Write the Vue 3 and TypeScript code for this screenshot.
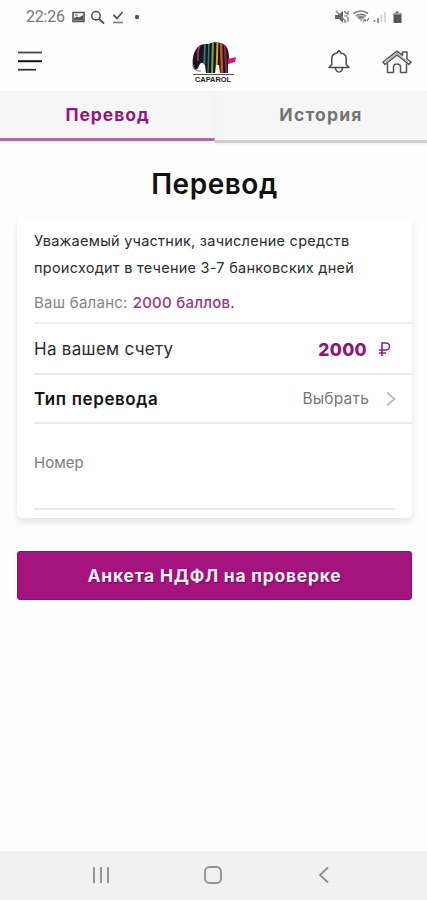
<script setup lang="ts">
import { ref } from 'vue'

type Tab = 'transfer' | 'history'
const activeTab = ref<Tab>('transfer')
const tabs: { id: Tab; label: string }[] = [
  { id: 'transfer', label: 'Перевод' },
  { id: 'history', label: 'История' },
]
const balance = 2000
</script>

<template>
  <div class="screen">
    <div class="status">
      <span class="clock">22:26</span>
      <svg class="status-left" width="72" height="16" viewBox="0 0 72 16" fill="none" stroke="#555" stroke-width="1.6">
        <path d="M1 3.500h11v9H1z" />
        <path d="M2 11.500V9l3-1.500 2 1 4-2.500v5.500z" fill="#555" stroke="none" />
        <path d="M3 6h3" stroke-width="1" />
        <circle cx="24" cy="6.700" r="4.200" />
        <path d="M27 10l5 4.500" stroke-width="2" />
        <path d="M41.500 6l3.500 3.500L50.500 3" stroke-width="1.800" />
        <path d="M41 13.500h10" stroke="#777" />
        <circle cx="65" cy="8" r="2.200" fill="#555" stroke="none" />
      </svg>
      <svg class="status-right" width="70" height="16" viewBox="0 0 70 16" fill="none" stroke="#777">
        <path d="M0 6h3l5-4v12l-4-4H0z" fill="#666" stroke="none" />
        <path d="M1 2l10 11M9 2l3 3M13 2v4M9 7h4M13 8v5M10 11v3" stroke="#777" stroke-width="1.200" />
        <path d="M18.500 4.500q7.500-5 14.500 0M21 7q5-3.500 10 0" stroke-width="1.700" />
        <path d="M20.500 6.500h11l-5.500 6z" fill="#aaa" stroke="none" />
        <path d="M23.500 9q2.500-2 5 0M28 12.500l2-2 1 2M32 12l2-3" stroke-width="1.300" />
        <path d="M39.500 13v-2M43 14V9" stroke="#777" stroke-width="1.500" />
        <path d="M46.500 13V6M50 13V3" stroke="#ccc" stroke-width="1.500" />
        <path d="M58.500 4h2V2.500h3V4h3v10h-8z" fill="#555" stroke="none" />
        <path d="M58.500 4.800h8" stroke="#aaa" stroke-width="1.800" />
      </svg>
    </div>

    <header class="header">
      <svg class="menu" width="26" height="22" viewBox="0 0 26 22">
        <path d="M0 2.500h24" stroke="#444" stroke-width="1.800" />
        <path d="M0 11.200h24" stroke="#111" stroke-width="2" />
        <path d="M0 19.700h18" stroke="#333" stroke-width="1.800" />
      </svg>
      <svg class="logo" width="46" height="44" viewBox="0 0 46 44">
        <defs>
          <clipPath id="body">
            <path d="M2 26C1 19 2 12 6 7C10 2 14 3 18 3C23 0 31 1 35 5C37 8 38 12 38 18L37 21L37 32H29L28 24H25L24 32H15L14 24C11 21 10 21 8 25C7 29 4 30 2 26Z" />
          </clipPath>
        </defs>
        <g clip-path="url(#body)">
          <path d="M0 0h46v34H0z" fill="#171719" />
          <path d="M10 3Q6 8 7 20" stroke="#a82c76" stroke-width="1.800" fill="none" />
          <path d="M14 1l-1 31" stroke="#33798c" stroke-width="1.800" />
          <path d="M18 1l-1 31" stroke="#337c75" stroke-width="1.500" />
          <path d="M22 1l-1 31" stroke="#7d9c49" stroke-width="2" />
          <path d="M26.500 1l-1 31" stroke="#d0a22f" stroke-width="2" />
          <path d="M30 1l1 31" stroke="#ca4b31" stroke-width="2.500" />
          <path d="M33.500 1l2 31" stroke="#9d2736" stroke-width="1.800" />
        </g>
        <path d="M37 18l8-2-1 5-7 2z" fill="#d01682" />
        <path d="M2 24Q3 31 10 30" fill="none" stroke="#777" stroke-width="1" />
        <path d="M2 33.500h41" stroke="#555" stroke-width="1.200" />
        <text x="4" y="41" class="brand" textLength="36" lengthAdjust="spacingAndGlyphs">CAPAROL</text>
      </svg>
      <svg class="bell" width="22" height="26" viewBox="0 0 22 26" fill="none" stroke="#4a4a4a" stroke-width="1.500" stroke-linejoin="round">
        <path d="M1 18.500l2.800-3V8.500Q4.500 5 9 4L11 1.500 13 4Q17.500 5 18.200 8.500v7l2.800 3z" />
        <path d="M7.500 19Q8 23 11 23T14.500 19" />
      </svg>
      <svg class="home" width="30" height="24" viewBox="0 0 30 24" fill="none" stroke="#555" stroke-width="1.500" stroke-linejoin="round">
        <path d="M1 12L15 1.200l5.500 4.200V2H25v7l4 3-2 2.500L15 5 3 14.500z" />
        <path d="M5.500 13.500V22.500h6V17q0-3 3.500-3t3.500 3v5.500h6v-9" />
        <path d="M4 12L15 3.200 26 12" stroke="#999" stroke-width="1" />
      </svg>
    </header>

    <nav class="tabs">
      <button
        v-for="tab in tabs"
        :key="tab.id"
        class="tab"
        :class="{ active: tab.id === activeTab }"
        @click="activeTab = tab.id"
      ><span :class="tab.id">{{ tab.label }}</span></button>
    </nav>

    <h1 class="title"><span>Перевод</span></h1>

    <section class="card">
      <p class="notice"><span class="line-one">Уважаемый участник, зачисление средств</span><br><span class="line-two">происходит в течение 3-7 банковских дней</span></p>
      <p class="balance"><span class="balance-label">Ваш баланс:</span><strong>{{ balance }} баллов.</strong></p>
      <div class="row account">
        <span class="account-label">На вашем счету</span>
        <span class="amount">{{ balance }}</span>
        <svg class="ruble" width="14" height="14" viewBox="0 0 14 14" fill="none" stroke="#92217c" stroke-width="1.600">
          <path d="M5 14V1h4a3.300 3.300 0 0 1 0 7H2M2 11h7" />
        </svg>
      </div>
      <div class="row type">
        <span class="type-label">Тип перевода</span>
        <span class="choose">Выбрать</span>
        <svg class="chevron" width="10" height="16" viewBox="0 0 10 16" fill="none" stroke="#bbb" stroke-width="1.800">
          <path d="M1 1.500L8.500 8 1 14.500" />
        </svg>
      </div>
      <div class="number"><span>Номер</span></div>
    </section>

    <button class="submit"><span>Анкета НДФЛ на проверке</span></button>

    <footer class="system">
      <svg width="18" height="18" viewBox="0 0 18 18" stroke="#969696" stroke-width="2">
        <path d="M2 1v16M9 1v16M16 1v16" />
      </svg>
      <svg width="18" height="18" viewBox="0 0 18 18" fill="none" stroke="#929292" stroke-width="1.900">
        <rect x="1" y="1" width="16" height="16" rx="4.500" />
      </svg>
      <svg width="18" height="18" viewBox="0 0 18 18" fill="none" stroke="#929292" stroke-width="1.900">
        <path d="M13 1.500L5 9l8 7.500" />
      </svg>
    </footer>
  </div>
</template>

<style>
body { background: #fefefe; }
</style>

<style scoped>
* { box-sizing: border-box; }
.screen {
  display: flex;
  flex-direction: column;
  height: 900px;
  width: 427px;
  overflow: hidden;
  background: #fefefe;
  color: #2c2c2c;
  font-family: Inter, "Noto Sans", sans-serif;
  white-space: nowrap;
}
svg { display: block; flex: none; }
button { border: 0; padding: 0; font-family: inherit; }
.status { display: flex; align-items: center; height: 34px; padding: 0 22px 0 26px; }
.clock { width: 46px; font: 16px/20px Roboto, sans-serif; letter-spacing: -0.2px; color: #777; }
.status-right { margin-left: auto; }
.header { display: flex; align-items: center; height: 57px; padding: 0 15px 4px 18px; }
.logo { margin-left: 147px; margin-top: 4px; }
.brand { font: 700 7.500px "Liberation Sans", sans-serif; fill: #222; }
.bell { margin-left: 91px; margin-top: 3px; }
.home { margin-left: auto; margin-top: 2px; }
.tabs { display: flex; height: 52px; background: #f6f6f6; flex: none; }
.tab {
  width: 212px;
  height: 52px;
  padding-bottom: 2px;
  border-bottom: 3px solid #d0d0d0;
  background: transparent;
  color: #747474;
  font-size: 17.500px;
  font-weight: 700;
  box-shadow: 0 1px 2px #eee;
}
.tab.active { width: 215px; height: 50px; padding-bottom: 0; border-color: #a86d9d; color: #92177d; box-shadow: 0 2px 2px #eee; }
.transfer { letter-spacing: 0.95px; }
.history { letter-spacing: 1.2px; }
.title { margin: 0; height: 75px; padding-top: 23px; padding-left: 2px; text-align: center; font-size: 28px; line-height: 36px; font-weight: 600; letter-spacing: 0.55px; color: #111; }
.card { height: 300px; width: 395px; margin-left: 17px; padding-left: 17px; border-radius: 5px; background: #fff; box-shadow: 0 4px 7px #e3e3e3; flex: none; }
.notice { margin: 0; padding-top: 9px; font-size: 14.500px; line-height: 27px; letter-spacing: 0.25px; }
.balance { display: flex; gap: 5px; height: 43px; margin: 0; padding-top: 12px; border-bottom: 2px solid #eee; font-size: 15px; line-height: 20px; letter-spacing: 0.25px; color: #858585; }
.balance strong { color: #9a3787; font-weight: 500; }
.row { display: flex; align-items: center; border-bottom: 2px solid #e9e9e9; }
.account { height: 51px; padding-right: 21px; font-size: 17px; }
.account-label { letter-spacing: 0.3px; }
.amount { margin-left: auto; margin-right: 10px; color: #901478; font-weight: 800; font-size: 17.500px; letter-spacing: 0.3px; padding-top: 2px; }
.type { height: 49px; padding-right: 16px; }
.type-label { font-size: 17px; font-weight: 600; letter-spacing: 0.6px; color: #151515; }
.choose { margin-left: auto; margin-right: 17px; font-size: 15.500px; letter-spacing: 0.2px; color: #777; }
.number { height: 86px; width: 361px; padding-top: 29px; border-bottom: 2px solid #e9e9e9; font-size: 15px; line-height: 20px; color: #7b7b7b; }
.submit { width: 395px; height: 49px; margin: 33px 0 0 17px; border-radius: 4px; background: #a5137f; color: #fdeffa; font-size: 17.500px; font-weight: 700; letter-spacing: 0.75px; text-shadow: 1px 1px 1px #681052; box-shadow: inset 0 0 1px 1px #91106f; flex: none; }
.system { display: flex; align-items: center; justify-content: space-between; height: 49px; margin-top: auto; padding: 0 94px 2px 92px; background: #f1f1f1; flex: none; }
</style>
